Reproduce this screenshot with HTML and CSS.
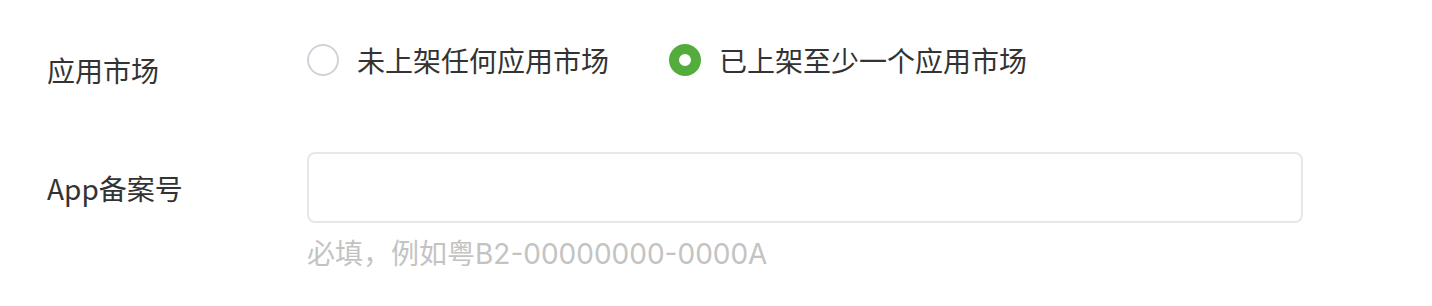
FILE: index.html
```html
<!DOCTYPE html>
<html lang="zh-CN">
<head>
<meta charset="utf-8">
<title>App备案</title>
<link rel="stylesheet" href="styles.css">
</head>
<body>
<form class="form">
  <div class="row row-market">
    <div class="label label-market">应用市场</div>
    <div class="radios">
      <label class="radio">
        <span class="dot"></span>
        <span class="radio-text">未上架任何应用市场</span>
      </label>
      <label class="radio checked">
        <span class="dot"></span>
        <span class="radio-text">已上架至少一个应用市场</span>
      </label>
    </div>
  </div>
  <div class="row row-record">
    <div class="label">App备案号</div>
    <div class="field">
      <div class="input"></div>
      <div class="help">必填，例如粤B2-00000000-0000A</div>
    </div>
  </div>
</form>
</body>
</html>
```

FILE: styles.css
```css
* { box-sizing: border-box; }
html, body { margin: 0; background: #ffffff; }
body {
  font-family: "Noto Sans CJK SC", "Noto Sans", sans-serif;
  font-size: 28px;
  color: #333333;
}
.form {
  padding: 40px 0 0 47px;
  display: flex;
  flex-direction: column;
}
.row {
  display: flex;
}
.row-market {
  align-items: flex-start;
}
.label {
  width: 260px;
  flex: none;
  line-height: 40px;
}
.label-market {
  margin-top: 10px;
}
.radios {
  display: flex;
  align-items: center;
  gap: 60px;
  height: 40px;
}
.radio {
  display: flex;
  align-items: center;
  gap: 18px;
  line-height: 40px;
}
.dot {
  width: 32px;
  height: 32px;
  border-radius: 50%;
  border: 2px solid #cfd3d9;
  flex: none;
  background: #fff;
}
.radio.checked .dot {
  border: 10px solid #52ad3c;
  background: #fff;
}
.row-record {
  margin-top: 62px;
}
.row-record .label {
  height: 71px;
  display: flex;
  align-items: center;
}
.field {
  display: flex;
  flex-direction: column;
}
.input {
  width: 996px;
  height: 71px;
  border: 2px solid #e4e7eb;
  border-radius: 8px;
}
.help {
  margin-top: 11px;
  line-height: 40px;
  font-family: "Inter", "Noto Sans CJK SC", sans-serif;
  color: #c3c3c3;
}
```
